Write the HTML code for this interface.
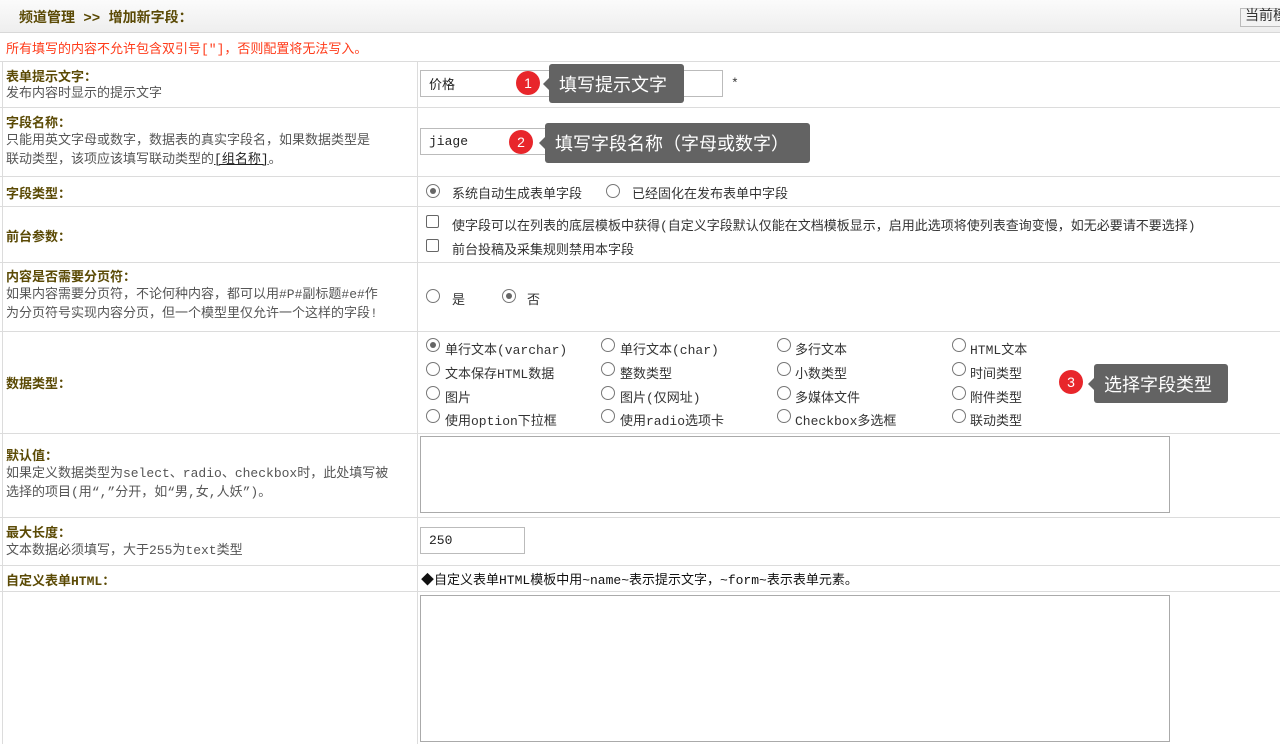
<!DOCTYPE html>
<html><head><meta charset="utf-8"><style>
*{margin:0;padding:0;box-sizing:border-box}
body{width:1280px;height:744px;position:relative;overflow:hidden;background:#fff;font-family:"Liberation Mono","Noto Sans CJK SC",monospace;font-size:13px;color:#333}
.a{position:absolute;white-space:nowrap}
.hl{position:absolute;left:0;width:1280px;height:1px;background:#dcdcdc}
.lb{font-weight:bold;color:#5b4a05}
.ds{color:#555;line-height:19px}
.rd{position:absolute;width:14px;height:14px;border:1px solid #777;border-radius:50%;background:#fff}
.rd.on::after{content:"";position:absolute;left:3px;top:3px;width:6px;height:6px;border-radius:50%;background:#666}
.cb{position:absolute;width:13px;height:13px;border:1px solid #666;border-radius:2px;background:#fff}
.in{position:absolute;border:1px solid #bbb;background:#fff;padding-left:8px;font-size:13px;color:#222;display:flex;align-items:center}
.tip{position:absolute;background:#636363;color:#fff;font-size:18px;border-radius:3px;display:flex;align-items:center;padding-left:10px;font-family:"Liberation Sans","Noto Sans CJK SC",sans-serif}
.tip::before{content:"";position:absolute;left:-6px;top:50%;margin-top:-6px;border:6px solid transparent;border-left:0;border-right-color:#636363}
.bd{position:absolute;width:24px;height:24px;border-radius:50%;background:#e8262b;color:#fff;font-size:14px;text-align:center;line-height:24px;font-family:"Liberation Sans",sans-serif}
</style></head><body>
<div class="a" style="left:0;top:0;width:1280px;height:33px;background:linear-gradient(#fbfbfb,#eeeeee);border-bottom:1px solid #d8d8d8"></div>
<div class="a lb" style="left:19px;top:7px;font-size:14px;color:#5b4a05">频道管理 &gt;&gt; 增加新字段：</div>
<div class="a" style="left:1240px;top:8px;width:50px;height:19px;border:1px solid #bbb;background:#f3f3f3;font-size:14px;padding-left:4px;line-height:17px">当前模</div>
<div class="a" style="left:6px;top:38px;color:#ff3b1a">所有填写的内容不允许包含双引号[″]，否则配置将无法写入。</div>
<div class="hl" style="top:61px"></div><div class="hl" style="top:107px"></div><div class="hl" style="top:176px"></div><div class="hl" style="top:206px"></div><div class="hl" style="top:262px"></div><div class="hl" style="top:331px"></div><div class="hl" style="top:433px"></div><div class="hl" style="top:517px"></div><div class="hl" style="top:565px"></div><div class="hl" style="top:591px"></div>
<div class="a" style="left:417px;top:61px;width:1px;height:683px;background:#dcdcdc"></div>
<div class="a" style="left:2px;top:61px;width:1px;height:683px;background:#dcdcdc"></div>

<div class="a lb" style="left:6px;top:66px">表单提示文字：</div>
<div class="a ds" style="left:6px;top:84px">发布内容时显示的提示文字</div>
<div class="in" style="left:420px;top:70px;width:303px;height:27px">价格</div>
<div class="a" style="left:731px;top:76px">*</div>

<div class="a lb" style="left:6px;top:112px">字段名称：</div>
<div class="a ds" style="left:6px;top:131px">只能用英文字母或数字，数据表的真实字段名，如果数据类型是<br>联动类型，该项应该填写联动类型的<u style="color:#222">[组名称]</u>。</div>
<div class="in" style="left:420px;top:128px;width:303px;height:27px">jiage</div>

<div class="a lb" style="left:6px;top:183px">字段类型：</div>
<div class="rd on" style="left:426px;top:184px"></div><div class="a" style="left:452px;top:183px">系统自动生成表单字段</div>
<div class="rd" style="left:606px;top:184px"></div><div class="a" style="left:632px;top:183px">已经固化在发布表单中字段</div>

<div class="a lb" style="left:6px;top:226px">前台参数：</div>
<div class="cb" style="left:426px;top:215px"></div><div class="a" style="left:452px;top:215px">使字段可以在列表的底层模板中获得(自定义字段默认仅能在文档模板显示，启用此选项将使列表查询变慢，如无必要请不要选择)</div>
<div class="cb" style="left:426px;top:239px"></div><div class="a" style="left:452px;top:239px">前台投稿及采集规则禁用本字段</div>

<div class="a lb" style="left:6px;top:266px">内容是否需要分页符：</div>
<div class="a ds" style="left:6px;top:285px">如果内容需要分页符，不论何种内容，都可以用#P#副标题#e#作<br>为分页符号实现内容分页，但一个模型里仅允许一个这样的字段!</div>
<div class="rd" style="left:426px;top:289px"></div><div class="a" style="left:452px;top:289px">是</div>
<div class="rd on" style="left:502px;top:289px"></div><div class="a" style="left:527px;top:289px">否</div>

<div class="a lb" style="left:6px;top:373px">数据类型：</div>
<div class="rd on" style="left:426px;top:338px"></div><div class="a" style="left:445px;top:339px">单行文本(varchar)</div>
<div class="rd" style="left:601px;top:338px"></div><div class="a" style="left:620px;top:339px">单行文本(char)</div>
<div class="rd" style="left:777px;top:338px"></div><div class="a" style="left:795px;top:339px">多行文本</div>
<div class="rd" style="left:952px;top:338px"></div><div class="a" style="left:970px;top:339px">HTML文本</div>
<div class="rd" style="left:426px;top:362px"></div><div class="a" style="left:445px;top:363px">文本保存HTML数据</div>
<div class="rd" style="left:601px;top:362px"></div><div class="a" style="left:620px;top:363px">整数类型</div>
<div class="rd" style="left:777px;top:362px"></div><div class="a" style="left:795px;top:363px">小数类型</div>
<div class="rd" style="left:952px;top:362px"></div><div class="a" style="left:970px;top:363px">时间类型</div>
<div class="rd" style="left:426px;top:386px"></div><div class="a" style="left:445px;top:387px">图片</div>
<div class="rd" style="left:601px;top:386px"></div><div class="a" style="left:620px;top:387px">图片(仅网址)</div>
<div class="rd" style="left:777px;top:386px"></div><div class="a" style="left:795px;top:387px">多媒体文件</div>
<div class="rd" style="left:952px;top:386px"></div><div class="a" style="left:970px;top:387px">附件类型</div>
<div class="rd" style="left:426px;top:409px"></div><div class="a" style="left:445px;top:410px">使用option下拉框</div>
<div class="rd" style="left:601px;top:409px"></div><div class="a" style="left:620px;top:410px">使用radio选项卡</div>
<div class="rd" style="left:777px;top:409px"></div><div class="a" style="left:795px;top:410px">Checkbox多选框</div>
<div class="rd" style="left:952px;top:409px"></div><div class="a" style="left:970px;top:410px">联动类型</div>

<div class="a lb" style="left:6px;top:445px">默认值：</div>
<div class="a ds" style="left:6px;top:464px">如果定义数据类型为select、radio、checkbox时，此处填写被<br>选择的项目(用“,”分开，如“男,女,人妖”)。</div>
<div class="in" style="left:420px;top:436px;width:750px;height:77px;border-color:#aaa"></div>

<div class="a lb" style="left:6px;top:522px">最大长度：</div>
<div class="a ds" style="left:6px;top:541px">文本数据必须填写，大于255为text类型</div>
<div class="in" style="left:420px;top:527px;width:105px;height:27px">250</div>

<div class="a lb" style="left:6px;top:570px">自定义表单HTML：</div>
<div class="a" style="left:421px;top:569px;color:#111">◆自定义表单HTML模板中用~name~表示提示文字，~form~表示表单元素。</div>
<div class="in" style="left:420px;top:595px;width:750px;height:147px;border-color:#aaa"></div>

<div class="tip" style="left:549px;top:64px;width:135px;height:39px">填写提示文字</div>
<div class="bd" style="left:516px;top:71px">1</div>
<div class="tip" style="left:545px;top:123px;width:265px;height:40px">填写字段名称（字母或数字）</div>
<div class="bd" style="left:509px;top:130px">2</div>
<div class="tip" style="left:1094px;top:364px;width:134px;height:39px">选择字段类型</div>
<div class="bd" style="left:1059px;top:370px">3</div>
</body></html>
